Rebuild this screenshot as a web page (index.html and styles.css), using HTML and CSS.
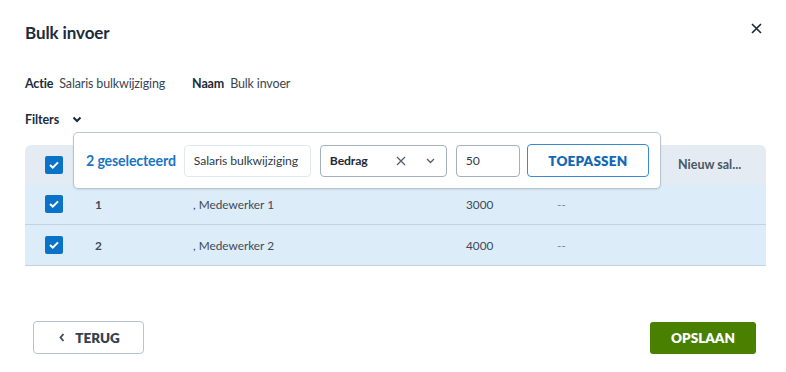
FILE: index.html
```html
<!DOCTYPE html>
<html lang="nl">
<head>
<meta charset="utf-8">
<link rel="stylesheet" href="styles.css">
</head>
<body>
<div class="dialog">
  <header class="head">
    <h1 class="title">Bulk invoer</h1>
    <button class="close" aria-label="Sluiten">
      <svg width="11" height="11" viewBox="0 0 11 11"><path d="M1 1 L10 10 M10 1 L1 10" stroke="#1c2833" stroke-width="1.6" fill="none"/></svg>
    </button>
  </header>

  <div class="meta">
    <span class="meta-label">Actie</span><span class="meta-value">Salaris bulkwijziging</span>
    <span class="meta-label meta-gap">Naam</span><span class="meta-value">Bulk invoer</span>
  </div>

  <div class="filters">
    <span class="filters-label">Filters</span>
    <svg class="chev" width="10" height="7" viewBox="0 0 10 7"><path d="M1.5 1.5 L5 5 L8.5 1.5" stroke="#1c2833" stroke-width="2" fill="none"/></svg>
  </div>

  <div class="table-wrap">
    <div class="table">
      <div class="row head-row">
        <div class="cell first"><span class="cb"><svg width="12" height="10" viewBox="0 0 12 10"><path d="M2 5 L4.8 7.6 L10 2.4" stroke="#fff" stroke-width="2" fill="none"/></svg></span></div>
        <div class="cell"></div>
        <div class="cell"></div>
        <div class="cell"></div>
        <div class="cell"></div>
        <div class="cell th">Nieuw sal...</div>
      </div>
      <div class="row body-row">
        <div class="cell first"><span class="cb"><svg width="12" height="10" viewBox="0 0 12 10"><path d="M2 5 L4.8 7.6 L10 2.4" stroke="#fff" stroke-width="2" fill="none"/></svg></span></div>
        <div class="cell num">1</div>
        <div class="cell">, Medewerker 1</div>
        <div class="cell">3000</div>
        <div class="cell dash">--</div>
        <div class="cell"></div>
      </div>
      <div class="row body-row">
        <div class="cell first"><span class="cb"><svg width="12" height="10" viewBox="0 0 12 10"><path d="M2 5 L4.8 7.6 L10 2.4" stroke="#fff" stroke-width="2" fill="none"/></svg></span></div>
        <div class="cell num">2</div>
        <div class="cell">, Medewerker 2</div>
        <div class="cell">4000</div>
        <div class="cell dash">--</div>
        <div class="cell"></div>
      </div>
    </div>

    <div class="bulk-pop">
      <span class="sel-count">2 geselecteerd</span>
      <div class="field f-action">Salaris bulkwijziging</div>
      <div class="field f-select">
        <span class="sel-text">Bedrag</span>
        <svg class="sel-x" width="10" height="10" viewBox="0 0 10 10"><path d="M1 1 L9 9 M9 1 L1 9" stroke="#55606c" stroke-width="1.3" fill="none"/></svg>
        <svg class="sel-chev" width="9" height="6" viewBox="0 0 9 6"><path d="M1 1 L4.5 4.5 L8 1" stroke="#55606c" stroke-width="1.3" fill="none"/></svg>
      </div>
      <div class="field f-amount">50</div>
      <button class="btn-apply">TOEPASSEN</button>
    </div>
  </div>

  <footer class="foot">
    <button class="btn-back">
      <svg width="6" height="9" viewBox="0 0 6 9"><path d="M4.5 1 L1.5 4.5 L4.5 8" stroke="#3c4a58" stroke-width="1.8" fill="none"/></svg>
      <span>TERUG</span>
    </button>
    <button class="btn-save">OPSLAAN</button>
  </footer>
</div>
</body>
</html>
```

FILE: styles.css
```css
* { box-sizing: border-box; }
html, body { margin: 0; padding: 0; background: #fff; }
body {
  font-family: "Lato", "Noto Sans", sans-serif;
  color: #2e3b48;
  width: 786px;
  height: 372px;
  overflow: hidden;
}
button { font-family: inherit; cursor: pointer; }

.dialog { padding: 0 20px 0 25px; }

.head {
  display: flex;
  align-items: center;
  justify-content: space-between;
  height: 64px;
}
.title {
  margin: 0;
  font-size: 17px;
  font-weight: 700;
  color: #1c2b3a;
  letter-spacing: -0.1px;
}
.close {
  border: 0;
  background: none;
  padding: 0;
  width: 11px;
  height: 11px;
  margin-right: 4px;
  margin-top: -8px;
  display: flex;
}

.meta {
  display: flex;
  align-items: center;
  height: 38px;
  font-size: 12.5px;
  letter-spacing: -0.15px;
}
.meta-label { font-weight: 700; color: #1c2b3a; margin-right: 6px; }
.meta-value { color: #3a4654; }
.meta-gap { margin-left: 27px; }

.filters {
  display: flex;
  align-items: center;
  height: 34px;
  font-size: 12.5px;
  letter-spacing: -0.1px;
}
.filters-label { font-weight: 700; color: #1c2b3a; }
.chev { margin-left: 13px; margin-top: 1px; }

.table-wrap {
  position: relative;
  margin-top: 9px;
}
.table { width: 741px; }
.row {
  display: grid;
  grid-template-columns: 70px 98px 273px 91px 121px 1fr;
  align-items: center;
  font-size: 11.8px;
  color: #3e4a57;
}
.head-row {
  height: 39px;
  background: #e4ebf2;
  border-radius: 6px 6px 0 0;
}
.body-row {
  height: 41px;
  background: #dcecf9;
  border-bottom: 1px solid #c3d2e0;
}
.cell { display: flex; align-items: center; white-space: nowrap; }
.first { padding-left: 20px; }
.num { font-weight: 700; }
.dash { color: #7a8692; }
.th { font-weight: 700; color: #4a5764; font-size: 12.5px; }

.cb {
  width: 18px;
  height: 18px;
  background: #0b73c7;
  border-radius: 2px;
  display: flex;
  align-items: center;
  justify-content: center;
}

.bulk-pop {
  position: absolute;
  left: 48px;
  top: -13px;
  width: 588px;
  height: 57px;
  background: #fff;
  border: 1px solid #b9c5d1;
  border-radius: 5px;
  display: flex;
  align-items: center;
  padding: 0 11px 0 12px;
  box-shadow: 0 1px 2px rgba(60, 80, 100, 0.12);
}
.sel-count {
  font-size: 14.2px;
  font-weight: 700;
  color: #1976c5;
  margin-right: 8px;
  white-space: nowrap;
  letter-spacing: -0.15px;
}
.field {
  height: 32px;
  border-radius: 4px;
  display: flex;
  align-items: center;
  font-size: 12.2px;
  color: #2e3b48;
  padding: 0 9px;
  white-space: nowrap;
  letter-spacing: -0.1px;
}
.f-action {
  width: 127px;
  border: 1px solid #e2e8ef;
  margin-right: 9px;
}
.f-select {
  width: 127px;
  border: 1px solid #a3b0bd;
  margin-right: 9px;
}
.sel-text { font-weight: 700; color: #1e2a36; flex: 1; }
.sel-x { margin-right: 20px; }
.sel-chev { margin-right: 2px; }
.f-amount {
  width: 64px;
  border: 1px solid #a3b0bd;
  margin-right: 7px;
}
.btn-apply {
  width: 122px;
  height: 33px;
  background: #fff;
  border: 1.5px solid #3a8ad2;
  border-radius: 4px;
  color: #1168b5;
  font-size: 13.5px;
  font-weight: 800;
  letter-spacing: 0.2px;
}

.foot {
  display: flex;
  justify-content: space-between;
  align-items: center;
  margin-top: 55px;
  padding: 0 10px 0 8px;
}
.btn-back {
  width: 111px;
  height: 33px;
  background: #fff;
  border: 1.5px solid #b6c3d2;
  border-radius: 4px;
  display: flex;
  align-items: center;
  justify-content: center;
  gap: 10px;
  font-size: 13.5px;
  font-weight: 800;
  color: #34414f;
  padding-right: 4px;
}
.btn-save {
  width: 106px;
  height: 32px;
  background: #4a8000;
  border: 0;
  border-radius: 3px;
  color: #fff;
  font-size: 13.5px;
  font-weight: 800;
}
```
